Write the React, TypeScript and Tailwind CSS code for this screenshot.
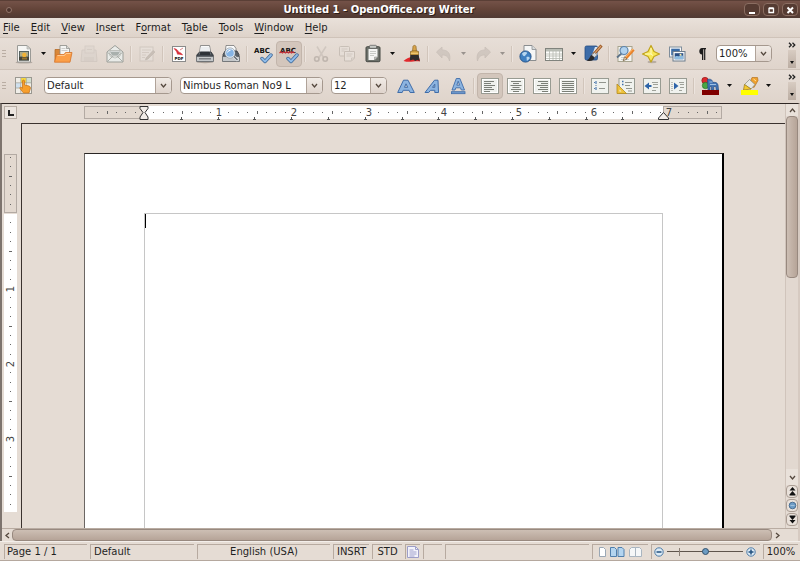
import { useState, type ReactNode } from 'react'

const INCH = 75

/* ---------- Icons ---------- */

function Icon({ children, faded = false }: { children: ReactNode; faded?: boolean }) {
  return (
    <svg viewBox="0 0 20 20" className={`h-5 w-5 shrink-0 ${faded ? 'opacity-40' : ''}`} fill="none" aria-hidden="true">
      {children}
    </svg>
  )
}

const NewIcon = () => (
  <Icon>
    <ellipse cx="10" cy="18.4" rx="8.5" ry="1.2" fill="#b5aba3" />
    <path d="M3.5 1.5h9.5l3.5 3.5v13h-13z" fill="#f6f6f4" stroke="#9a9a96" />
    <path d="M13 1.5v3.5h3.5z" fill="#d4d4d0" stroke="#a5a5a1" strokeWidth=".6" />
    <rect x="5" y="7" width="10" height="9.5" fill="#56625f" />
    <rect x="6" y="8" width="8" height="4.5" fill="#b0aa84" />
    <circle cx="10.3" cy="11" r="2.2" fill="#f2b233" />
    <path d="M5 13h10v3.5H5z" fill="#45443b" />
    <path d="M8 13.5h5v2H8z" fill="#96742f" />
  </Icon>
)

const OpenIcon = () => (
  <Icon>
    <path d="M2 5.5h5l1 2h8v10H2z" fill="#d8873a" stroke="#b56c2a" strokeWidth=".8" />
    <path d="M7 1.5h6.500l3 3v9H7z" fill="#f4f4f2" stroke="#8b8b87" strokeWidth=".8" />
    <path d="M13.500 1.500v3h3" fill="#d8d8d4" stroke="#8b8b87" strokeWidth=".7" />
    <path d="M8.5 4.500h4M8.5 6.500h6" stroke="#c3c3bf" strokeWidth=".8" />
    <path d="M3.500 10.500h7.500l1.5-2h6.500l-2 9.700H1.5z" fill="#fb9f48" stroke="#d5742a" strokeWidth=".8" />
    <path d="M4.500 11.500h7l1.6-2h4.500" stroke="#ffd09b" strokeWidth=".9" />
  </Icon>
)

const SaveIcon = () => (
  <Icon faded>
    <path d="M3 6h14l1 11.5H2z" fill="#d5cfca" stroke="#b8b0a9" strokeWidth=".8" />
    <rect x="6" y="2" width="9" height="7" fill="#d9d3cd" stroke="#beb6af" strokeWidth=".8" />
    <path d="M5 13h10v4H5z" fill="#c9c2bc" />
    <path d="M8 5.5h5" stroke="#c0b8b1" />
  </Icon>
)

const MailIcon = () => (
  <Icon>
    <path d="M2 8 10 1.5 18 8v10H2z" fill="#e9ebe8" stroke="#9a9d98" />
    <path d="M5 6.5h10V12l-5 2-5-2z" fill="#fff" stroke="#a7aaa5" strokeWidth=".7" />
    <path d="M5 7.500h10l-2 4H7z" fill="#a9b0ad" />
    <path d="M2.5 17.5 8 12h4l5.5 5.5M2.5 8.5 7.5 12M17.5 8.5 12.5 12" stroke="#a5a8a3" strokeWidth=".9" />
  </Icon>
)

const EditIcon = () => (
  <Icon faded>
    <rect x="3" y="3" width="13" height="14" fill="#e9e5e1" stroke="#b5ada6" />
    <path d="M5 6h9M5 8.5h7M5 11h4M5 13.5h3" stroke="#bfb7b0" />
    <path d="m9 14 7-7.5 2 1.5-7 7-2.5 1z" fill="#a09890" stroke="#8c847c" strokeWidth=".6" />
  </Icon>
)

const PdfIcon = () => (
  <Icon>
    <rect x="3.5" y="2.5" width="13" height="15" fill="#fff" stroke="#8a8a8a" />
    <path d="M5 4.5c3 .5 4 2 4.5 3.5 1.5.5 3 1 4 3-2-.8-3.5-1-5-.8C8 8 7 6.5 5 4.5z" fill="#d8303a" stroke="#d8303a" strokeWidth=".6" />
    <path d="m11 6 3-2" stroke="#d88" />
    <text x="5.5" y="16" fontSize="4" fontWeight="700" fill="#111" fontFamily="DejaVu Sans">PDF</text>
  </Icon>
)

const PrintIcon = () => (
  <Icon>
    <ellipse cx="10" cy="18" rx="8.5" ry="1.2" fill="#aaa098" />
    <path d="M5.5 1.5h9l1.500 8H4.500z" fill="#fafafa" stroke="#777" strokeWidth=".8" />
    <path d="M1.800 11 4.500 8h11.500l2.200 3v2H1.800z" fill="#454b52" stroke="#25292e" strokeWidth=".8" />
    <path d="M5.700 3h8.600l1.200 7.500h-11z" fill="#eceef0" />
    <path d="M5.200 7.500h9.600l.7 3.500h-11z" fill="#2e3338" />
    <path d="M1.500 12.500h17v5h-17z" fill="#c5c8ca" stroke="#5e6266" strokeWidth=".8" />
    <path d="M4 14.800h12" stroke="#6b6f73" strokeWidth="1.200" />
  </Icon>
)

const PreviewIcon = () => (
  <Icon>
    <path d="M5 1.500h8l2 3v6H4z" fill="#fafafa" stroke="#777" strokeWidth=".8" />
    <path d="M2 10.500 4 7h12l2 3.500V13H2z" fill="#596067" stroke="#30353a" strokeWidth=".8" />
    <path d="M1.500 12.500h17v5h-17z" fill="#c5c8ca" stroke="#5e6266" strokeWidth=".8" />
    <path d="m12 11.500 5 5" stroke="#e7eaec" strokeWidth="3" />
    <path d="m12.500 12 4 4" stroke="#63696e" strokeWidth="1.500" />
    <circle cx="9" cy="9" r="4.500" fill="#86b4e4" stroke="#e8eef3" strokeWidth="1.300" />
    <circle cx="9" cy="9" r="5.200" stroke="#667686" strokeWidth=".5" />
    <path d="M6.500 8.500a3 3 0 0 1 3-2.200" stroke="#fff" />
  </Icon>
)

const SpellIcon = ({ auto = false }: { auto?: boolean }) => (
  <Icon>
    <text x="1" y="8.500" fontSize="7" fontWeight="700" fill="#111" fontFamily="DejaVu Sans">ABC</text>
    {auto && <path d="m.5 9 1.500-1.200L3.500 9 5 7.800 6.500 9 8 7.800 9.500 9 11 7.800 12.500 9 14 7.800 15.500 9" stroke="#c8323c" strokeWidth="1.200" />}
    <path d="m9 14.500 3 3 6-6.500" stroke="#3b6696" strokeWidth="3.400" strokeLinejoin="round" strokeLinecap="round" />
    <path d="m9 14.500 3 3 6-6.500" stroke="#8fbbe8" strokeWidth="1.900" strokeLinejoin="round" strokeLinecap="round" />
  </Icon>
)

const CutIcon = () => (
  <Icon faded>
    <path d="m6 2.500 6.500 11M15 2.500 8 13.500" stroke="#b3aba4" strokeWidth="1.500" />
    <circle cx="5.800" cy="15" r="2.200" stroke="#8e867f" strokeWidth="1.600" />
    <circle cx="14.200" cy="15" r="2.200" stroke="#8e867f" strokeWidth="1.600" />
  </Icon>
)

const CopyIcon = () => (
  <Icon faded>
    <rect x="2.500" y="2.500" width="10" height="9.500" rx="1" fill="#e9e4df" stroke="#a0988f" />
    <path d="M4.500 5h6M4.500 7h3" stroke="#b5ada5" />
    <path d="M7.500 7.500h10V14l-3 3h-7z" fill="#eeeae6" stroke="#a0988f" />
    <path d="M9.500 10h6M9.500 12h5M14.500 17v-3h3" stroke="#b5ada5" />
  </Icon>
)

const PasteIcon = () => (
  <Icon>
    <rect x="3" y="2.700" width="14" height="15" rx="1.200" fill="#6d716b" stroke="#454843" />
    <rect x="6.500" y="1.300" width="7" height="3" rx="1" fill="#c9ccc7" stroke="#555" strokeWidth=".7" />
    <path d="M5.500 5h9v8l-3 3h-6z" fill="#f4f5f3" />
    <path d="M7 7.500h6M7 9.500h6M7 11.500h4" stroke="#c1c4bf" strokeWidth=".9" />
    <path d="M14.500 13h-3v3z" fill="#c5c8c3" stroke="#80837e" strokeWidth=".5" />
  </Icon>
)

const BrushIcon = () => (
  <Icon>
    <path d="M1.500 17c3-3 6-3.800 9-4l7 1.500.500 3c-5-1-10 1.500-16.500-.5z" fill="#e2282c" />
    <path d="M11 2.500c.3-1.500 2.700-1.500 3 0l.5 5h-4z" fill="#d8a44c" stroke="#8c6420" strokeWidth=".7" />
    <path d="M8.500 7.500c2-1 6.500-1 8 0V11h-8z" fill="#d8a545" stroke="#7d5a1d" strokeWidth=".7" />
    <path d="M8.300 11h8.400l1 6-2.500-1-2 1-2-1.500-3.400 1z" fill="#2e2b2b" />
    <path d="M8.800 9.300h7.500" stroke="#f1cc7c" />
  </Icon>
)

const UndoIcon = ({ flip = false }: { flip?: boolean }) => (
  <Icon faded>
    <path
      d={flip ? 'M17.500 8 12 3v3C6 6 3 9.500 4.500 17 5.500 12.500 8 11 12 11v3z' : 'M2.500 8 8 3v3c6 0 9 3.500 7.500 11C14.500 12.500 12 11 8 11v3z'}
      fill="#b5ada6"
      stroke="#a39b94"
      strokeWidth=".8"
    />
  </Icon>
)

const LinkIcon = () => (
  <Icon>
    <path d="M6 1.500h8l4 4v11H6z" fill="#f5f6f6" stroke="#8a8d8f" />
    <path d="M14 1.500v4h4" fill="#d9dcdd" stroke="#8a8d8f" strokeWidth=".8" />
    <circle cx="7.500" cy="12.500" r="5.600" fill="#3f7fc0" stroke="#1f4e86" strokeWidth=".9" />
    <path d="M4 9.500c2-2 4-1.800 5-1 .5 1.500-1.500 2-2 3.500-1 .6-2.500-.5-3-2.500zM8.500 13c1.500-.7 3 0 3.300 1-.5 1.500-2 2.500-3 2.700z" fill="#b7d6ef" />
  </Icon>
)

const TableIcon = () => (
  <Icon>
    <rect x="1.500" y="4.500" width="17" height="12" fill="#fdfdfb" stroke="#80837d" />
    <rect x="2" y="5" width="16" height="2.500" fill="#b9bdb5" />
    <path d="M2 10h16M2 12h16M2 14.500h16M5.500 7v9M9 7v9M12 7v9M15.500 7v9" stroke="#b5b9b1" strokeWidth=".8" />
  </Icon>
)

const DrawIcon = () => (
  <Icon>
    <rect x="2" y="2" width="12.500" height="14" rx="1.500" fill="#3d6ca8" stroke="#234c82" strokeWidth=".8" />
    <path d="M8 14 12 3h2.500v8z" fill="#dce6f1" />
    <path d="m18.500 1.500-8 9" stroke="#97531f" strokeWidth="3" />
    <path d="m18 2-6 6.800" stroke="#d9a06b" strokeWidth="1.200" />
    <path d="m11.500 8.500 2.500 2.300-2.500 2.700-2.800-2.400z" fill="#d5d8da" stroke="#777" strokeWidth=".6" />
    <path d="M8.500 11c-2 1.500-1.500 4-5 5.500 4 1.500 8 0 8-3z" fill="#2b2b2d" />
  </Icon>
)

const FindIcon = () => (
  <Icon>
    <rect x="3" y="2.500" width="14" height="15" fill="#f4f4f0" stroke="#a8a48f" />
    <path d="M6 11h9M6 13.500h7M6 15.500h8" stroke="#b9c4ca" strokeWidth=".8" />
    <path d="m7 9-5 4.500" stroke="#5d7287" strokeWidth="1.800" />
    <circle cx="9" cy="6.500" r="4" fill="#b1d2ee" stroke="#5f84ab" strokeWidth="1.200" />
    <path d="m18.500 5.500-7.500 8.500" stroke="#e8822a" strokeWidth="3" />
    <path d="m18 5-7.500 8.500" stroke="#ffb566" strokeWidth="1" />
    <path d="m9.500 12.800 2.500 2.200-3.800 1.800z" fill="#f0d6b4" stroke="#5c4325" strokeWidth=".6" />
  </Icon>
)

const StarIcon = () => (
  <Icon>
    <ellipse cx="11" cy="18" rx="4.500" ry="1.200" fill="#b8ada3" />
    <path d="M10 1.500 13 7.500 18.500 10 13 12.500 10 18l-3-5.500L1.500 10 7 7.500z" fill="#f8e85a" stroke="#c0a31c" strokeWidth="1.200" strokeLinejoin="round" />
    <path d="M10 4v6H4M10 10l2 1.500" stroke="#fffbc2" />
  </Icon>
)

const GalleryIcon = () => (
  <Icon>
    <rect x="2.500" y="3" width="12" height="10" fill="#f7f8f9" stroke="#7f8d9b" />
    <rect x="4.200" y="4.700" width="8.600" height="6.600" fill="#3a6ca6" />
    <rect x="6" y="7.500" width="12" height="9.500" fill="#f7f8f9" stroke="#6d7c8b" />
    <rect x="7.700" y="9.200" width="8.600" height="6" fill="#2a4f84" />
    <path d="M7.700 13c2-2 3 0 4.500-1s2.500-1 4.100 0v3.200H7.700z" fill="#8dbbdf" />
    <circle cx="13.500" cy="10.800" r="1" fill="#f3e7a0" />
  </Icon>
)

const ParaIcon = () => (
  <Icon>
    <path d="M9 4h4v1.200h-.7V16h-1.200V5.200h-.8V16H9v-5.500C7.200 10.500 6.300 9 6.300 7.300 6.300 5.500 7.300 4 9 4z" fill="#1b1b1b" />
  </Icon>
)

const StylesIcon = () => (
  <Icon>
    <rect x="1.500" y="1.500" width="16" height="16" fill="#f0eee8" stroke="#9a9891" />
    <rect x="7" y="2" width="5.500" height="5" fill="#f7d83c" />
    <rect x="2" y="7" width="5" height="5" fill="#cfe0ee" />
    <rect x="12.500" y="2" width="4.500" height="5" fill="#d3dfd0" />
    <path d="M1.500 6.800h16M1.500 12h16M6.800 1.500v16M12.300 1.500v16" stroke="#a5a39b" strokeWidth=".8" />
    <path d="M8.500 5c0-1.300 2-1.300 2 0v4l4.500 1c1.300.4 1.500 1.500 1.200 3l-1.200 4H9.500L6 12.500c-.5-1.200.8-1.700 1.500-1l1 .8z" fill="#f79f2c" stroke="#c9771f" strokeWidth=".8" />
  </Icon>
)

const BoldIcon = () => (
  <Icon>
    <path d="M1.700 16.500 7.500 4.200h4.500l6.300 12.300h-4.200l-1-2.200H7.200l-1 2.200zM8.500 11.300h3.200L10 7.800z" fill="#8cb4e0" fillRule="evenodd" stroke="#3f6ca8" strokeWidth="1" strokeLinejoin="round" />
  </Icon>
)

const ItalicIcon = () => (
  <Icon>
    <path d="M3 16.500 12.500 4.200H16l.5 12.300h-3.700v-2.200H8.500l-1.800 2.200zM10.500 11.300h2.300V8.200z" fill="#8cb4e0" fillRule="evenodd" stroke="#3f6ca8" strokeWidth="1" strokeLinejoin="round" />
  </Icon>
)

const UnderlineIcon = () => (
  <Icon>
    <path d="M4 14 8.300 2.500h3.600L16.500 14h-3.200l-.8-2.200H7.800L7 14zM8.800 9.200h2.800l-1.400-4z" fill="#8cb4e0" fillRule="evenodd" stroke="#3f6ca8" strokeWidth=".9" strokeLinejoin="round" />
    <rect x="3.500" y="15.700" width="13.500" height="2" fill="#6f9bcd" stroke="#3f6ca8" strokeWidth=".8" />
  </Icon>
)

const ParagraphIcon = ({ lines }: { lines: string }) => (
  <Icon>
    <rect x="1.500" y="2.500" width="17" height="15" fill="#eff1ed" stroke="#989b92" />
    <rect x="2.500" y="3.500" width="15" height="13" stroke="#fff" />
    <path d={lines} stroke="#7b7f77" strokeWidth="1" />
  </Icon>
)

const LEFT_LINES = 'M4 5.500h10M4 7.500h7M4 9.500h11M4 11.500h8M4 13.500h10M4 15.500h6'
const CENTER_LINES = 'M5 5.500h10M7 7.500h6M4.500 9.500h11M6.500 11.500h7M5 13.500h10M7 15.500h6'
const RIGHT_LINES = 'M6 5.500h10M9 7.500h7M5 9.500h11M8 11.500h8M6 13.500h10M10 15.500h6'
const FULL_LINES = 'M4 5.500h12M4 7.500h12M4 9.500h12M4 11.500h12M4 13.500h12M4 15.500h12'

const NumberingIcon = () => (
  <Icon>
    <rect x="1.500" y="2.500" width="17" height="15" fill="#f0f2ee" stroke="#989b92" />
    <path d="M9 6.500h7M9 12.500h6" stroke="#92958e" />
    <path d="M4 6.500h1M4 12.500h1M6 5v3M5.500 9.500h1M6 11v3" stroke="#4f7aaf" strokeWidth="1.200" />
  </Icon>
)

const BulletsIcon = () => (
  <Icon>
    <rect x="3" y="2.500" width="15.500" height="15" fill="#f0f2ee" stroke="#989b92" />
    <path d="M9 6.500h7M9 9.500h5M10 12.500h6M12 15h4" stroke="#92958e" />
    <path d="M6 5.500h1.500M6 8.500h1.500" stroke="#3f70ad" strokeWidth="1.600" />
    <path d="M1 8v9.500h9.500z" fill="#eec23c" stroke="#b58c1c" strokeWidth=".8" />
    <path d="M3.500 13.500v2h2z" fill="#f5f0df" />
  </Icon>
)

const IndentIcon = ({ less = false }: { less?: boolean }) => (
  <Icon>
    <rect x="1.500" y="2.500" width="17" height="15" fill="#f0f2ee" stroke="#989b92" />
    <path
      d={less ? 'M10 6.500h6M11 8.500h5M11 11.500h5M10 14.500h4' : 'M11 6.500h5M12 8.500h4M12 11.500h4M11 14.500h3'}
      stroke="#9fa29a"
    />
    <path d={less ? 'M2.500 10 7 6.500V9h2.500v2H7v2.500z' : 'M10.500 10 6 6.500v7z'} fill="#2d64a8" />
    {!less && <path d="M4 6v9" stroke="#888b84" strokeDasharray="1 1" />}
  </Icon>
)

const FontColorIcon = () => (
  <Icon>
    <circle cx="5" cy="4.500" r="3.200" fill="#dd2a2e" stroke="#8a1013" strokeWidth=".6" />
    <circle cx="5.500" cy="9.500" r="3.200" fill="#4aa544" stroke="#1f6b1d" strokeWidth=".6" />
    <path d="M7.500 3.500c3-1 5 .5 5.500 3 2-.5 4.500 0 5 2.500l.5 5h-2.300l-.4-3.500h-2V14h-2.300v-3.500H10V14H8z" fill="#4273b3" stroke="#274f86" strokeWidth=".7" />
    <path d="M9.500 6h3M10 8.500h6" stroke="#a9c8e9" strokeWidth=".9" />
    <rect x="2" y="14" width="17" height="5" fill="#800000" />
  </Icon>
)

const HighlightIcon = () => (
  <Icon>
    <path d="M13 1.500h5.500l.5 3-4 7-5-3z" fill="#efa12e" stroke="#b57422" strokeWidth=".7" />
    <path d="M10.500 3.500 16 8.500l-4 4.500-6.500-4.500z" fill="#e6e7e4" stroke="#84867f" strokeWidth=".7" />
    <path d="M5.500 8.500 12 13l-7.500 1z" fill="#f5ca2e" stroke="#9b7a10" strokeWidth=".7" />
    <path d="m14.500 3 2.500 2" stroke="#ffe1a3" />
    <rect x="2" y="14" width="17" height="5" fill="#ffff00" />
  </Icon>
)

/* ---------- Toolbar parts ---------- */

function ToolButton({ label, active = false, disabled = false, children }: {
  label: string
  active?: boolean
  disabled?: boolean
  children: ReactNode
}) {
  return (
    <button
      type="button"
      title={label}
      aria-label={label}
      disabled={disabled}
      className={`flex h-[26px] w-[26px] shrink-0 items-center justify-center rounded-sm border ${
        active ? 'border-[#c2b5ab] bg-[#d3c6bc]' : 'border-transparent'
      }`}
    >
      {children}
    </button>
  )
}

function Arrow({ label, disabled = false }: { label: string; disabled?: boolean }) {
  return (
    <button type="button" aria-label={label} disabled={disabled} className="flex h-[26px] w-[13px] shrink-0 items-center justify-center">
      <svg viewBox="0 0 5 3" className={`h-[3px] w-[5px] ${disabled ? 'opacity-35' : ''}`} aria-hidden="true">
        <path d="M0 0h5L2.500 3z" fill="#111" />
      </svg>
    </button>
  )
}

function Divider() {
  return (
    <div className="flex h-4 w-1.5 shrink-0 justify-center">
      <div className="w-0.5 border-l border-[#d1c5bb] bg-[#ece4de]" />
    </div>
  )
}

function Grip() {
  return (
    <div className="flex w-[11px] shrink-0 flex-col gap-0.5 pl-0.5">
      <div className="h-px w-1 bg-[#b9ada3]" />
      <div className="h-px w-1 bg-[#b9ada3]" />
      <div className="h-px w-1 bg-[#b9ada3]" />
    </div>
  )
}

function ToolbarEnd() {
  return (
    <button type="button" aria-label="More toolbar options" className="ml-auto mr-1 flex h-7 w-2 shrink-0 flex-col items-center pt-0.5">
      <svg viewBox="0 0 8 6" className="h-1.5 w-2 shrink-0" fill="none" stroke="#222" strokeWidth="1.300" aria-hidden="true">
        <path d="m1 .7 2.300 2.300L1 5.300M4.500.7 6.800 3 4.500 5.300" />
      </svg>
      <span className="mt-0.5 flex w-2 flex-1 items-center justify-center bg-gradient-to-b from-[#d8ccc2] to-[#bbada2]">
        <svg viewBox="0 0 4 3" className="mt-2 h-[3px] w-1" aria-hidden="true">
          <path d="M0 0h4L2 3z" fill="#111" />
        </svg>
      </span>
    </button>
  )
}

function Combo({ label, options, className }: { label: string; options: string[]; className: string }) {
  return (
    <div className={`relative h-[17px] shrink-0 rounded-sm border border-[#a5988e] bg-white ${className}`}>
      <select
        aria-label={label}
        className="block h-full w-full appearance-none bg-transparent pl-0.5 pr-4 text-[10px] leading-[15px] text-[#1f1f1f] outline-none"
      >
        {options.map((option) => (
          <option key={option}>{option}</option>
        ))}
      </select>
      <span className="pointer-events-none absolute inset-y-0 right-0 flex w-4 items-center justify-center rounded-r-sm border-l border-[#b0a399] bg-gradient-to-b from-[#f1ebe6] to-[#dfd4cc]">
        <Chevron direction="down" />
      </span>
    </div>
  )
}

const chevrons = {
  up: 'M1 5 3.500 2 6 5',
  down: 'M1 2 3.500 5 6 2',
  left: 'M5 1 2 3.500 5 6',
  right: 'M2 1 5 3.500 2 6',
}

function Chevron({ direction }: { direction: keyof typeof chevrons }) {
  return (
    <svg viewBox="0 0 7 7" className="h-[7px] w-[7px]" fill="none" stroke="#55493f" strokeWidth="1.300" aria-hidden="true">
      <path d={chevrons[direction]} />
    </svg>
  )
}

/* ---------- Rulers ---------- */

// Marks every eighth of an inch, longer ones at the half, numbers at the inch
function rulerMarks(from: number, to: number) {
  const marks: { pos: number; kind: 'dot' | 'half' | 'inch'; inch: number }[] = []
  for (let i = from; i <= to; i++) {
    if (i === 0) continue
    marks.push({
      pos: Math.round((i * INCH) / 8),
      kind: i % 8 === 0 ? 'inch' : i % 4 === 0 ? 'half' : 'dot',
      inch: i / 8,
    })
  }
  return marks
}

function HorizontalRuler() {
  const tabs = Array.from({ length: 13 }, (_, i) => Math.round(60 + (i + 1) * 36.8))
  return (
    <svg viewBox="0 0 640 14" className="h-3.5 w-[640px] shrink-0" role="img" aria-label="Horizontal ruler">
      <rect x="60" y="0" width="519" height="13" fill="#fff" />
      <rect x=".5" y=".5" width="59" height="12" fill="#e3d9d0" stroke="#b3aaa3" />
      <rect x="579.5" y=".5" width="58" height="12" fill="#e3d9d0" stroke="#b3aaa3" />
      {rulerMarks(-5, 61).map(({ pos, kind, inch }) =>
        kind === 'inch' ? (
          <text key={pos} x={60 + pos} y="10" fontSize="10" textAnchor="middle" fill="#444">{inch}</text>
        ) : (
          <rect key={pos} x={60 + pos} y={kind === 'half' ? 5 : 6} width="1" height={kind === 'half' ? 3 : 1} fill="#666" />
        ),
      )}
      {tabs.map((x) => (
        <path key={x} d={`M${x - 1} 13.500h3M${x + 0.5} 11v2`} stroke="#555" strokeWidth="1" />
      ))}
      <path d="M56 .5h8v2l-3 4 3 4.500v2.500h-8V11l3-4.500-3-4z" fill="#f1ece8" stroke="#333" />
      <path d="M574.500 13.500h10v-1.500l-5-5.500-5 5.500z" fill="#f3eeea" stroke="#333" />
    </svg>
  )
}

function VerticalRuler() {
  return (
    <svg viewBox="0 0 13 358" className="h-[358px] w-[13px] shrink-0" role="img" aria-label="Vertical ruler">
      <rect x="0" y="60" width="13" height="298" fill="#fff" />
      <rect x=".5" y=".5" width="12" height="58" fill="#e3d9d0" stroke="#b3aaa3" />
      {rulerMarks(-6, 31).map(({ pos, kind, inch }) =>
        kind === 'inch' ? (
          <text key={pos} transform={`translate(10 ${60 + pos}) rotate(-90)`} fontSize="10" textAnchor="middle" fill="#444">
            {inch}
          </text>
        ) : (
          <rect key={pos} x={kind === 'half' ? 5 : 6} y={59 + pos} width={kind === 'half' ? 3 : 1} height="1" fill="#666" />
        ),
      )}
    </svg>
  )
}

/* ---------- Window parts ---------- */

const windowButtons = [
  { label: 'Minimize', icon: <rect x="1" y="6" width="6" height="2" fill="#fff" /> },
  { label: 'Maximize', icon: <path d="M2 2.500h4.500v4H2zM2 2h4.500" fill="none" stroke="#fff" strokeWidth="1.300" /> },
  { label: 'Close', icon: <path d="m1.500 1.500 5.500 5.500M7 1.500 1.500 7" stroke="#fff" strokeWidth="2" /> },
]

function TitleBar() {
  return (
    <header className="flex h-[18px] shrink-0 items-center border-t border-[#5a3f36] bg-gradient-to-b from-[#745248] via-[#634439] to-[#503a33] pr-0.5">
      <button type="button" aria-label="Window menu" className="flex w-3.5 shrink-0 justify-end">
        <span className="mr-0.5 h-1.5 w-1.5 rounded-full border border-[#93766b] bg-[#4b332c]" />
      </button>
      <h1 className="min-w-0 flex-1 truncate text-center text-[10px] font-bold leading-4 text-white [text-shadow:1px_1px_0_#2d1d18]">
        Untitled 1 - OpenOffice.org Writer
      </h1>
      <div className="flex shrink-0 gap-[3px]">
        {windowButtons.map(({ label, icon }) => (
          <button
            key={label}
            type="button"
            aria-label={label}
            className="flex h-[13px] w-4 items-center justify-center rounded-sm border border-[#8a6d61] bg-[#553b32]"
          >
            <svg viewBox="0 0 8 8" className="h-2 w-2" aria-hidden="true">{icon}</svg>
          </button>
        ))}
      </div>
    </header>
  )
}

// [text before the shortcut key, key, rest]
const menus = [
  ['', 'F', 'ile'],
  ['', 'E', 'dit'],
  ['', 'V', 'iew'],
  ['', 'I', 'nsert'],
  ['F', 'o', 'rmat'],
  ['T', 'a', 'ble'],
  ['', 'T', 'ools'],
  ['', 'W', 'indow'],
  ['', 'H', 'elp'],
]

function MenuBar() {
  return (
    <nav className="flex h-5 shrink-0 items-center gap-[11px] border-b border-[#cfc3b9] bg-gradient-to-b from-[#e9e1da] to-[#ded3ca] pl-[3px]">
      {menus.map(([before, key, after]) => (
        <button key={before + key + after} type="button" className="text-[10px] leading-4 text-[#1c1c1c]">
          {before}
          <span className="underline underline-offset-2">{key}</span>
          {after}
        </button>
      ))}
    </nav>
  )
}

function StandardToolbar() {
  return (
    <div role="toolbar" aria-label="Standard" className="flex h-8 shrink-0 items-center border-b border-[#cfc3b9] bg-gradient-to-b from-[#e7ded7] to-[#dfd4cb]">
      <Grip />
      <ToolButton label="New"><NewIcon /></ToolButton>
      <Arrow label="New document types" />
      <ToolButton label="Open"><OpenIcon /></ToolButton>
      <ToolButton label="Save" disabled><SaveIcon /></ToolButton>
      <ToolButton label="Document as E-mail"><MailIcon /></ToolButton>
      <Divider />
      <ToolButton label="Edit File" disabled><EditIcon /></ToolButton>
      <Divider />
      <ToolButton label="Export as PDF"><PdfIcon /></ToolButton>
      <ToolButton label="Print"><PrintIcon /></ToolButton>
      <ToolButton label="Page Preview"><PreviewIcon /></ToolButton>
      <Divider />
      <ToolButton label="Spelling"><SpellIcon /></ToolButton>
      <ToolButton label="AutoSpellcheck" active><SpellIcon auto /></ToolButton>
      <Divider />
      <ToolButton label="Cut" disabled><CutIcon /></ToolButton>
      <ToolButton label="Copy" disabled><CopyIcon /></ToolButton>
      <ToolButton label="Paste"><PasteIcon /></ToolButton>
      <Arrow label="Paste options" />
      <ToolButton label="Format Paintbrush"><BrushIcon /></ToolButton>
      <Divider />
      <ToolButton label="Undo" disabled><UndoIcon /></ToolButton>
      <Arrow label="Undo history" disabled />
      <ToolButton label="Redo" disabled><UndoIcon flip /></ToolButton>
      <Arrow label="Redo history" disabled />
      <Divider />
      <ToolButton label="Hyperlink"><LinkIcon /></ToolButton>
      <ToolButton label="Table"><TableIcon /></ToolButton>
      <Arrow label="Table size" />
      <ToolButton label="Show Draw Functions"><DrawIcon /></ToolButton>
      <Divider />
      <ToolButton label="Find & Replace"><FindIcon /></ToolButton>
      <ToolButton label="Navigator"><StarIcon /></ToolButton>
      <ToolButton label="Gallery"><GalleryIcon /></ToolButton>
      <ToolButton label="Nonprinting Characters"><ParaIcon /></ToolButton>
      <Combo label="Zoom" options={['100%', '75%', '50%']} className="w-14" />
      <ToolbarEnd />
    </div>
  )
}

function FormattingToolbar() {
  return (
    <div role="toolbar" aria-label="Formatting" className="flex h-[33px] shrink-0 items-center bg-gradient-to-b from-[#e7ded7] to-[#dfd4cb] pb-0.5">
      <Grip />
      <ToolButton label="Styles and Formatting"><StylesIcon /></ToolButton>
      <div className="ml-[7px] mr-1.5 flex shrink-0 gap-2">
        <Combo label="Apply Style" options={['Default', 'Heading 1', 'Text body']} className="w-32" />
        <Combo label="Font Name" options={['Nimbus Roman No9 L', 'DejaVu Sans']} className="w-[143px]" />
        <Combo label="Font Size" options={['12', '10', '14']} className="w-14" />
      </div>
      <ToolButton label="Bold"><BoldIcon /></ToolButton>
      <ToolButton label="Italic"><ItalicIcon /></ToolButton>
      <ToolButton label="Underline"><UnderlineIcon /></ToolButton>
      <Divider />
      <ToolButton label="Align Left" active><ParagraphIcon lines={LEFT_LINES} /></ToolButton>
      <ToolButton label="Centered"><ParagraphIcon lines={CENTER_LINES} /></ToolButton>
      <ToolButton label="Align Right"><ParagraphIcon lines={RIGHT_LINES} /></ToolButton>
      <ToolButton label="Justified"><ParagraphIcon lines={FULL_LINES} /></ToolButton>
      <Divider />
      <ToolButton label="Numbering On/Off"><NumberingIcon /></ToolButton>
      <ToolButton label="Bullets On/Off"><BulletsIcon /></ToolButton>
      <ToolButton label="Decrease Indent"><IndentIcon less /></ToolButton>
      <ToolButton label="Increase Indent"><IndentIcon /></ToolButton>
      <Divider />
      <ToolButton label="Font Color"><FontColorIcon /></ToolButton>
      <Arrow label="Font colors" />
      <ToolButton label="Highlighting"><HighlightIcon /></ToolButton>
      <Arrow label="Highlighting colors" />
      <ToolbarEnd />
    </div>
  )
}

function NavButton({ label, children }: { label: string; children: ReactNode }) {
  return (
    <button type="button" aria-label={label} className="flex h-[13px] w-full items-center justify-center rounded-sm border border-[#aa9d93] bg-[#e9e1da]">
      <svg viewBox="0 0 9 9" className="h-[9px] w-[9px]" aria-hidden="true">{children}</svg>
    </button>
  )
}

function VerticalScrollbar() {
  return (
    <div className="flex w-[13px] shrink-0 flex-col border-l border-[#d0c4bb] bg-[#e2d8d0]">
      <button type="button" aria-label="Scroll up" className="flex h-3 shrink-0 items-center justify-center bg-[#e9e1da]">
        <Chevron direction="up" />
      </button>
      <div className="min-h-0 flex-1">
        <div className="h-[46%] rounded-sm border border-[#98897f] bg-gradient-to-r from-[#cdbfb4] to-[#b6a498]" />
      </div>
      <button type="button" aria-label="Scroll down" className="flex h-4 shrink-0 items-center justify-center bg-[#e9e1da]">
        <Chevron direction="down" />
      </button>
      <div className="flex flex-col gap-px bg-[#e5dcd4] pb-0.5">
        <NavButton label="Previous page">
          <path d="M4.500 0 7.500 3.500h-6zM4.500 4 7.500 7.500h-6zM1.500 7.500h6v1h-6z" fill="#111" />
        </NavButton>
        <NavButton label="Navigation">
          <circle cx="4.500" cy="4.500" r="3.300" fill="#6d9cc6" stroke="#4b6f93" />
          <path d="M2.500 4.500h4" stroke="#a2c2dc" />
        </NavButton>
        <NavButton label="Next page">
          <path d="M1.500.5h6v1h-6zM1.500 1.500h6L4.500 5zM1.500 5h6L4.500 8.500z" fill="#111" />
        </NavButton>
      </div>
    </div>
  )
}

function HorizontalScrollbar() {
  return (
    <div className="flex h-[13px] shrink-0 border-t border-[#b9aca2] bg-[#e5dcd4] pr-4">
      <button type="button" aria-label="Scroll left" className="flex w-2.5 shrink-0 items-center justify-center">
        <Chevron direction="left" />
      </button>
      <div className="h-full flex-1 rounded-sm border border-[#98897f] bg-gradient-to-b from-[#cdbfb4] to-[#b6a498]" />
      <button type="button" aria-label="Scroll right" className="flex w-2.5 shrink-0 items-center justify-center">
        <Chevron direction="right" />
      </button>
    </div>
  )
}

function StatusCell({ className, children }: { className: string; children?: ReactNode }) {
  return (
    <div className={`flex h-[15px] items-center whitespace-nowrap border-l border-t border-[#b7aaa0] ${className}`}>
      {children}
    </div>
  )
}

function StatusBar() {
  const [zoom, setZoom] = useState(50)

  return (
    <footer className="flex h-5 shrink-0 items-center gap-[3px] border-b border-t border-b-[#b5a89e] border-t-[#f3eeea] bg-[#e5dcd4] pl-1 pr-0.5 text-[10px] text-[#1f1f1f]">
      <StatusCell className="w-[83px] pl-0.5">Page 1 / 1</StatusCell>
      <StatusCell className="w-[104px] pl-[3px]">Default</StatusCell>
      <StatusCell className="w-[133px] justify-center">English (USA)</StatusCell>
      <StatusCell className="w-9 justify-center">INSRT</StatusCell>
      <StatusCell className="w-[30px] justify-center">STD</StatusCell>
      <StatusCell className="w-[15px] justify-center">
        <svg viewBox="0 0 12 12" className="h-3 w-3" aria-label="Document modified">
          <path d="M.5.500h8l3 3v8H.5z" fill="#f3f3fb" stroke="#9d9ec8" />
          <path d="M8.500.500v3h3M2.500 4h4M2.500 6h7M2.500 8h7M2.500 10h5" stroke="#a0a1cc" fill="none" />
        </svg>
      </StatusCell>
      <StatusCell className="w-[19px]" />
      <StatusCell className="min-w-0 flex-1" />
      <StatusCell className="w-14 justify-center gap-1">
        <button type="button" aria-label="Single page">
          <svg viewBox="0 0 7 10" className="h-2.5 w-[7px]"><path d="M.5.500h4l2 2v7h-6z" fill="#fff" stroke="#9aa7b4" /></svg>
        </button>
        <button type="button" aria-label="Two columns">
          <svg viewBox="0 0 15 10" className="h-2.5 w-[15px]">
            <path d="M.5.500h4l2 2v7h-6zM8 .5h4l2 2v7H8z" fill="#b3d4ef" stroke="#4f7eac" />
          </svg>
        </button>
        <button type="button" aria-label="Book mode">
          <svg viewBox="0 0 13 10" className="h-2.5 w-[13px]">
            <path d="M2.500.500h4v9h-6v-7zM6.500.500h4l2 2v7h-6z" fill="#f5f7f8" stroke="#a9b5c0" />
          </svg>
        </button>
      </StatusCell>
      <StatusCell className="w-[109px] justify-between pl-0.5 pr-1">
        <button type="button" aria-label="Zoom out" onClick={() => setZoom(zoom - 5)}>
          <svg viewBox="0 0 10 10" className="h-2.5 w-2.5">
            <circle cx="5" cy="5" r="4.200" fill="#dceaf5" stroke="#4e7ba6" />
            <path d="M2.500 5h5" stroke="#23517f" strokeWidth="1.500" />
          </svg>
        </button>
        <span className="relative flex h-3 w-[76px] items-center">
          <span className="absolute left-3 top-0.5 h-2 w-px bg-[#8b7f76]" />
          <input
            type="range"
            aria-label="Zoom"
            value={zoom}
            onChange={(e) => setZoom(Number(e.target.value))}
            className="h-px w-full appearance-none bg-[#5f554d] [&::-webkit-slider-thumb]:h-[7px] [&::-webkit-slider-thumb]:w-[7px] [&::-webkit-slider-thumb]:appearance-none [&::-webkit-slider-thumb]:rounded-full [&::-webkit-slider-thumb]:border [&::-webkit-slider-thumb]:border-[#31506c] [&::-webkit-slider-thumb]:bg-[#6b9bc3]"
          />
        </span>
        <button type="button" aria-label="Zoom in" onClick={() => setZoom(zoom + 5)}>
          <svg viewBox="0 0 10 10" className="h-2.5 w-2.5">
            <circle cx="5" cy="5" r="4.200" fill="#dceaf5" stroke="#4e7ba6" />
            <path d="M2.500 5h5M5 2.500v5" stroke="#23517f" strokeWidth="1.500" />
          </svg>
        </button>
      </StatusCell>
      <StatusCell className="w-[35px] justify-center">100%</StatusCell>
    </footer>
  )
}

export default function App() {
  return (
    <div className="flex h-screen flex-col overflow-hidden bg-[#e5dcd4] font-['DejaVu_Sans',sans-serif]">
      <TitleBar />
      <MenuBar />
      <StandardToolbar />
      <FormattingToolbar />

      {/* Document area */}
      <main className="flex min-h-0 flex-1 flex-col border-l-2 border-r-2 border-t border-l-[#7d746e] border-r-[#d6cac1] border-t-[#2f2724]">
        <div className="flex min-h-0 flex-1">
          {/* Tab selector and vertical ruler */}
          <div className="flex w-[19px] shrink-0 flex-col items-start overflow-hidden pl-0.5">
            <button type="button" aria-label="Tab type" className="mt-0.5 flex h-[13px] w-[13px] shrink-0 items-center justify-center border border-[#b8ada4] bg-[#ece5df]">
              <svg viewBox="0 0 6 6" className="h-1.5 w-1.5" aria-hidden="true">
                <path d="M1 0v5h5" fill="none" stroke="#222" strokeWidth="2" />
              </svg>
            </button>
            <div className="mt-[35px]">
              <VerticalRuler />
            </div>
          </div>

          <div className="flex min-w-0 flex-1 flex-col">
            <div className="flex h-[19px] shrink-0 justify-center overflow-hidden pt-0.5 pl-px">
              <HorizontalRuler />
            </div>
            <div className="flex min-h-0 flex-1 justify-center overflow-hidden border-l border-t border-[#3a322e] pt-[29px]">
              <div className="flex w-[640px] shrink-0 border-l border-r-2 border-t border-l-[#6b6663] border-r-black border-t-[#2a2624] bg-white pl-[59px] pr-[59px] pt-[59px]">
                <div role="textbox" aria-label="Document text" aria-multiline="true" className="flex-1 border-l border-r border-t border-[#c6c6c6]">
                  <div className="h-3.5 w-px bg-black" />
                </div>
              </div>
            </div>
          </div>

          <VerticalScrollbar />
        </div>
        <HorizontalScrollbar />
      </main>

      <StatusBar />
    </div>
  )
}
